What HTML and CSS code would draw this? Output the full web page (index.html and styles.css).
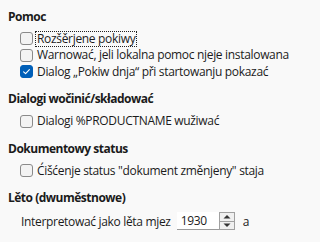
FILE: index.html
```html
<!DOCTYPE html>
<html lang="hsb">
<head>
<meta charset="utf-8">
<link rel="stylesheet" href="styles.css">
</head>
<body>
<div class="page">
  <section class="group">
    <h2 class="title">Pomoc</h2>
    <div class="items">
      <label class="check"><span class="box"></span><span class="text focus">Rozšěrjene pokiwy</span></label>
      <label class="check"><span class="box"></span><span class="text">Warnować, jeli lokalna pomoc njeje instalowana</span></label>
      <label class="check"><span class="box on"><svg viewBox="0 0 13 13" width="13" height="13"><path d="M3.6 6.8 L5.6 8.7 L9.4 4.6" fill="none" stroke="#fff" stroke-width="1.1" stroke-linecap="round" stroke-linejoin="round"/></svg></span><span class="text">Dialog „Pokiw dnja“ při startowanju pokazać</span></label>
    </div>
  </section>
  <section class="group">
    <h2 class="title">Dialogi wočinić/składować</h2>
    <div class="items">
      <label class="check"><span class="box"></span><span class="text">Dialogi %PRODUCTNAME wužiwać</span></label>
    </div>
  </section>
  <section class="group">
    <h2 class="title">Dokumentowy status</h2>
    <div class="items">
      <label class="check"><span class="box"></span><span class="text">Ćišćenje status "dokument změnjeny" staja</span></label>
    </div>
  </section>
  <section class="group">
    <h2 class="title">Lěto (dwuměstnowe)</h2>
    <div class="spinrow">
      <span class="text">Interpretować jako lěta mjez</span>
      <div class="spin">
        <span class="entry">1930</span>
        <span class="buttons">
          <span class="btn"><svg viewBox="0 0 8 5" width="8" height="5"><path d="M0.5 4.5 L4 1 L7.5 4.5 Z" fill="#333"/></svg></span>
          <span class="btn"><svg viewBox="0 0 8 5" width="8" height="5"><path d="M0.5 0.5 L4 4 L7.5 0.5 Z" fill="#333"/></svg></span>
        </span>
      </div>
      <span class="text">a</span>
    </div>
  </section>
</div>
</body>
</html>
```
FILE: styles.css
```css
html, body {
  margin: 0;
  padding: 0;
  background: #f9f9f9;
}
.page {
  width: 300px;
  height: 242px;
  box-sizing: border-box;
  padding: 8.5px 0 0 8px;
  font-family: "Open Sans", "Noto Sans", sans-serif;
  font-size: 12px;
  color: #1b1b1b;
  display: flex;
  flex-direction: column;
  gap: 11px;
}
.title {
  margin: 0 0 6px 0;
  font-size: 12px;
  line-height: 16px;
  font-weight: 700;
  letter-spacing: -0.5px;
  color: #1b1b1b;
}
.items {
  display: flex;
  flex-direction: column;
  padding-left: 12px;
}
.check {
  display: flex;
  align-items: center;
  height: 16.5px;
  gap: 4px;
  line-height: 14px;
}
.box {
  width: 11px;
  height: 11px;
  border: 1px solid #8a8a8a;
  border-radius: 3px;
  background: #f3f3f3;
  flex: none;
  position: relative;
}
.box.on {
  background: #005fb8;
  border-color: #005fb8;
}
.box.on svg {
  position: absolute;
  left: -1px;
  top: -1px;
}
.text {
  white-space: nowrap;
  letter-spacing: -0.32px;
}
.focus {
  outline: 1px dotted #222;
  outline-offset: 0;
  padding: 0 1px 0 1px;
  margin-left: -1px;
}
.spinrow {
  display: flex;
  align-items: center;
  padding-left: 13px;
  height: 18px;
}
.spin {
  display: flex;
  margin-left: 6px;
  margin-right: 8px;
  height: 18px;
}
.entry {
  width: 42px;
  box-sizing: border-box;
  background: #fff;
  padding-left: 4px;
  line-height: 18px;
  border-bottom: 1px solid #9a9a9a;
  letter-spacing: -0.3px;
}
.buttons {
  width: 16px;
  box-sizing: border-box;
  border: 1px solid #a0a0a0;
  background: #f0f0f0;
  display: flex;
  flex-direction: column;
}
.btn {
  flex: 1;
  display: flex;
  align-items: center;
  justify-content: center;
}
.btn + .btn {
  border-top: 1px solid #a0a0a0;
}
.btn svg {
  display: block;
}
```
